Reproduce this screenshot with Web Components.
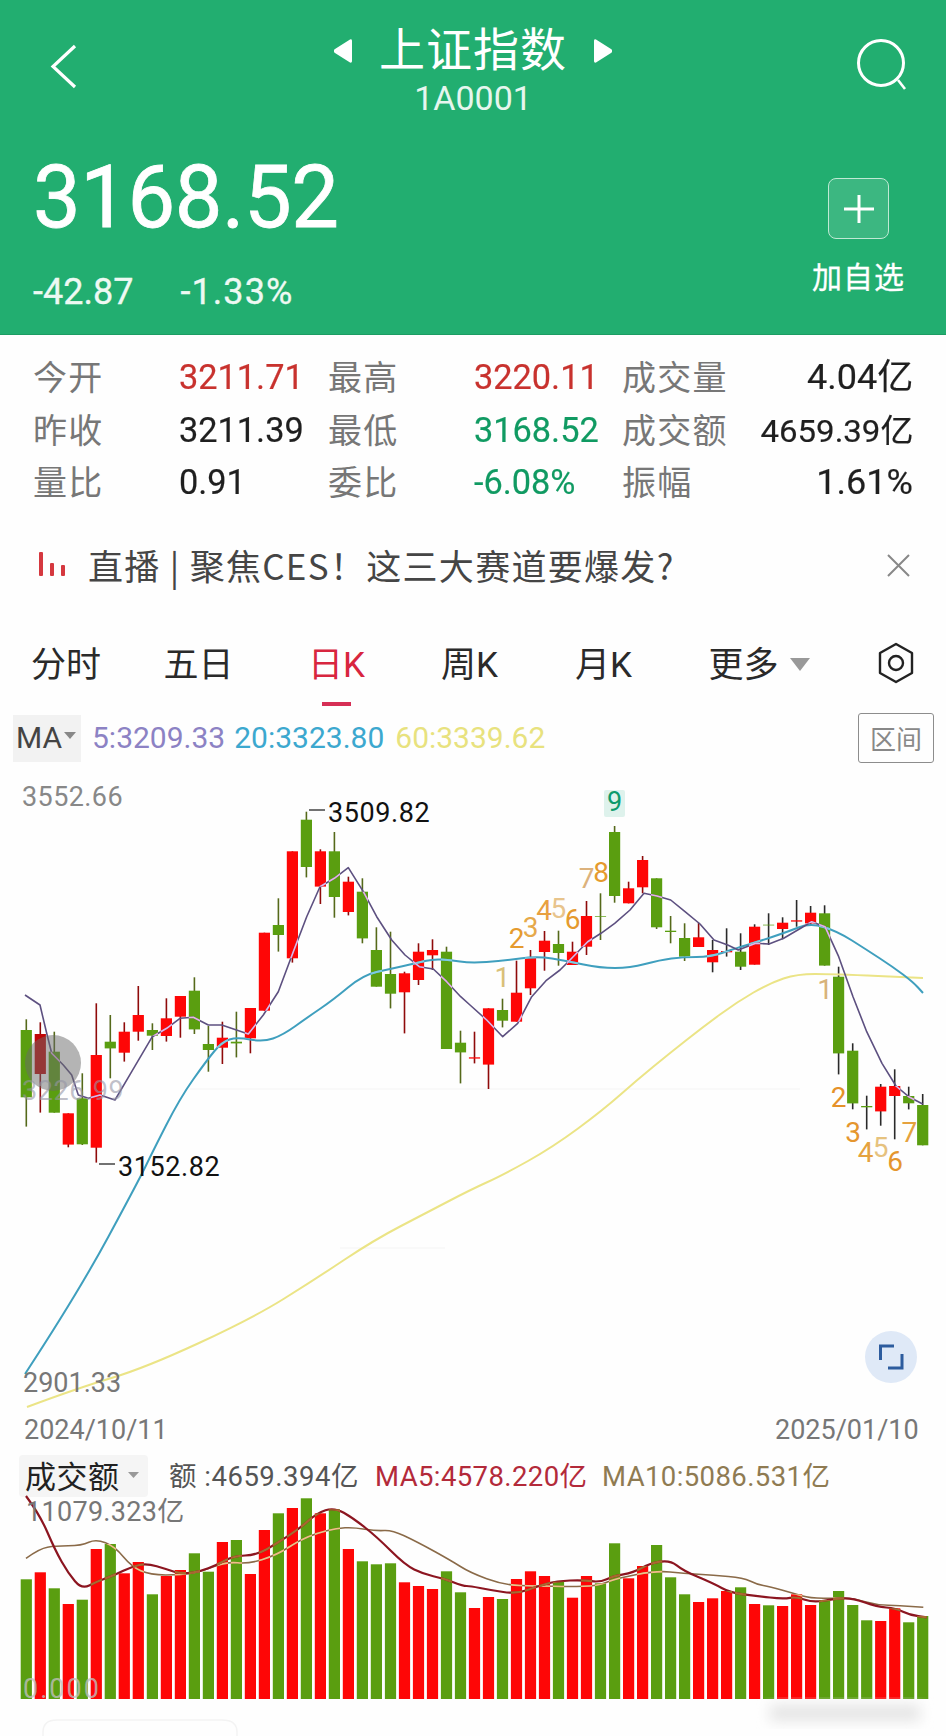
<!doctype html>
<html lang="zh">
<head>
<meta charset="utf-8">
<title>上证指数</title>
<style>
  html, body { margin: 0; background: #fefefe; }
  body { width: 946px; height: 1736px; overflow: hidden; font-family: Roboto, "Noto Sans CJK SC", sans-serif; }
</style>
</head>
<body>
<template id="quote_header">
  <style>
    :host { display: block; height: 335px; box-sizing: border-box; background: #22ae70; color: #fff; border-bottom: 1px solid #1c9c63; }
    .top { display: grid; grid-template-columns: 1fr auto 1fr; height: 131px; padding-top: 18px; box-sizing: border-box; }
    .back { padding: 26px 0 0 50px; }
    .search { justify-self: end; padding: 20px 38px 0 0; }
    .title { display: flex; align-items: center; gap: 27px; height: 56px; font: 400 46px/56px "Noto Sans CJK SC", sans-serif; letter-spacing: 1px; }
    .title svg { margin-top: 10px; }
    .code { text-align: center; font: 400 34px/36px Roboto, sans-serif; color: #e6f6ee; margin-top: 6px; }
    .bottom { display: flex; justify-content: space-between; padding: 0 41px 0 33px; }
    .price { font: 400 88px/92px Roboto, sans-serif; transform: scaleX(.965); transform-origin: left; letter-spacing: -.5px; margin-top: 20px; -webkit-text-stroke: .8px #fff; }
    .change { display: flex; gap: 47px; font: 400 36px/44px Roboto, sans-serif; margin-top: 27px; color: #eef9f3; -webkit-text-stroke: .3px #eef9f3; }
    .change ::slotted([slot=percent]) { letter-spacing: 1.100px; }
    .add { display: flex; flex-direction: column; align-items: center; }
    .box { width: 61px; height: 61px; box-sizing: border-box; margin-top: 47px; border: 1px solid #bfe9d4; border-radius: 8px; background: rgba(255,255,255,.12); display: flex; align-items: center; justify-content: center; }
    .add span { font: 400 30px/40px "Noto Sans CJK SC", sans-serif; margin-top: 16px; letter-spacing: 1px; -webkit-text-stroke: .3px #fff; }
  </style>
  <div class="top">
    <div class="back"><svg width="28" height="46" viewBox="0 0 28 46" fill="none" stroke="#fff" stroke-width="3.2"><path d="M25 2 3 22.5 25 43"/></svg></div>
    <div>
      <div class="title">
        <svg width="18" height="24" viewBox="0 0 18 24"><path d="M16 .5 1 10a2.300 2.300 0 0 0 0 4l15 9.500a1.500 1.500 0 0 0 2-1.300V1.800A1.500 1.500 0 0 0 16 .5z" fill="#fff"/></svg>
        <span><slot name="title"></slot></span>
        <svg width="18" height="24" viewBox="0 0 18 24"><path d="M2 .5 17 10a2.300 2.300 0 0 1 0 4L2 23.500a1.500 1.500 0 0 1-2-1.300V1.800A1.500 1.500 0 0 1 2 .5z" fill="#fff"/></svg>
      </div>
      <div class="code"><slot name="code"></slot></div>
    </div>
    <div class="search"><svg width="52" height="54" viewBox="0 0 52 54" fill="none" stroke="#fff" stroke-width="3"><circle cx="25" cy="25" r="22.5"/><path d="M42 42l7 9" stroke-width="2.6"/></svg></div>
  </div>
  <div class="bottom">
    <div>
      <div class="price"><slot name="price"></slot></div>
      <div class="change"><slot name="change"></slot><slot name="percent"></slot></div>
    </div>
    <div class="add">
      <div class="box"><svg width="32" height="32" viewBox="0 0 32 32" stroke="#fff" stroke-width="3"><path d="M1 16h30M16 2v28"/></svg></div>
      <span><slot name="add"></slot></span>
    </div>
  </div>
</template>

<template id="stat_grid">
  <style>
    :host { display: grid; grid-template-columns: 295px 294px 291px; grid-auto-rows: 52.5px; padding: 17px 0 11.5px 33px; }
  </style>
  <slot></slot>
</template>

<template id="stat_cell">
  <style>
    :host { display: flex; align-items: center; }
    .l { width: 146px; flex: none; margin-top: -4px; font: 400 34px/52px "Noto Sans CJK SC", sans-serif; color: #777; letter-spacing: 1.200px; white-space: nowrap; }
    .v { font: 400 35px/52px Roboto, "Noto Sans CJK SC", sans-serif; color: #1f1f1f; transform: scaleX(.98); transform-origin: left; white-space: nowrap; -webkit-text-stroke: .2px currentColor; }
    :host([tone=up]) .v { color: #c8322e; }
    :host([tone=down]) .v { color: #109a62; }
    :host([end]) .l { width: auto; }
    :host([end]) .v { margin-left: auto; transform: scaleX(1.03); transform-origin: right; }
    :host([small]) .v { font-size: 32px; }
  </style>
  <span class="l"></span><span class="v"><slot></slot></span>
</template>

<template id="news_bar">
  <style>
    :host { display: flex; align-items: center; height: 90px; padding: 0 36px 2px 39px; box-sizing: border-box; color: #454545; }
    .t { flex: 1; margin-left: 22px; font: 400 35px/44px "Noto Sans CJK SC", Roboto, sans-serif; white-space: nowrap; letter-spacing: 1.300px; }
  </style>
  <svg width="27" height="26" viewBox="0 0 27 26" fill="#d5383f"><rect width="4" height="24" rx="1"/><rect x="11" y="11" width="4" height="13" rx="1"/><rect x="22" y="13" width="4" height="11" rx="1"/></svg>
  <span class="t"><slot></slot></span>
  <svg width="23" height="23" viewBox="0 0 23 23" stroke="#888" stroke-width="2" fill="none"><path d="M1 1l21 21M22 1 1 22"/></svg>
</template>

<template id="period_tabs">
  <style>
    :host { display: grid; grid-template-columns: 132px 133px 143px 123px 145px 133px 1fr; height: 102px; align-items: start; padding-top: 31px; box-sizing: border-box; }
    ::slotted(*) { justify-self: center; }
    .gear { justify-self: start; margin: 0 0 0 68px; }
  </style>
  <slot></slot>
  <svg class="gear" width="38" height="42" viewBox="0 0 38 42" fill="none" stroke="#222" stroke-width="2.400"><path d="M19 2 35 11v20L19 40 3 31V11z" stroke-linejoin="round"/><circle cx="19" cy="21" r="7"/></svg>
</template>

<template id="period_tab">
  <style>
    :host { display: block; position: relative; font: 400 35px/48px Roboto, "Noto Sans CJK SC", sans-serif; color: #2a2a2a; white-space: nowrap; }
    :host([active]) { color: #d8263f; }
    :host([active])::after { content: ""; position: absolute; left: 14px; right: 14px; bottom: -16px; height: 4px; background: #d62f55; }
    :host([more]) { justify-self: start; padding-right: 31px; margin-left: 33px; }
    :host([more])::after { content: ""; position: absolute; right: 0; top: 16px; border: 10px solid transparent; border-top: 13px solid #999; border-bottom: 0; }
  </style>
  <slot></slot>
</template>

<template id="ma_legend">
  <style>
    :host { display: flex; align-items: center; height: 50px; padding-left: 13px; font: 400 30px/50px Roboto, sans-serif; white-space: nowrap; }
    .ma { display: flex; align-items: center; width: 68px; height: 47px; margin-right: 11px; background: #f2f2f2; color: #444; padding-left: 3px; box-sizing: border-box; gap: 2px; }
    .ma i { border: 6px solid transparent; border-top: 7px solid #888; border-bottom: 0; margin-top: -6px; }
    .a { color: #8c82c4; } .b { color: #3ca8cf; margin-left: 9px; } .c { color: #e8e27e; margin-left: 11px; }
    .range { margin-left: auto; margin-right: 12px; width: 76px; height: 50px; box-sizing: border-box; border: 1px solid #8d8d8d; border-radius: 3px; color: #888; font: 400 26px/48px "Noto Sans CJK SC", sans-serif; text-align: center; }
  </style>
  <div class="ma">MA<i></i></div>
  <span class="a"><slot name="ma5"></slot></span><span class="b"><slot name="ma20"></slot></span><span class="c"><slot name="ma60"></slot></span>
  <div class="range"><slot name="range"></slot></div>
</template>

<template id="kline_chart">
  <style>
    :host { display: block; height: 687px; }
    svg { display: block; }
    text { font-family: Roboto, sans-serif; }
  </style>
  <svg width="946" height="687" viewBox="0 763 946 687"></svg>
</template>

<template id="volume_panel">
  <style>
    :host { display: block; height: 286px; }
    svg { display: block; }
    text { font-family: Roboto, "Noto Sans CJK SC", sans-serif; }
  </style>
  <svg width="946" height="286" viewBox="0 1450 946 286"></svg>
</template>

<quote-header>
  <span slot="title">上证指数</span>
  <span slot="code">1A0001</span>
  <span slot="price">3168.52</span>
  <span slot="change">-42.87</span>
  <span slot="percent">-1.33%</span>
  <span slot="add">加自选</span>
</quote-header>

<stat-grid>
  <stat-cell label="今开" tone="up">3211.71</stat-cell>
  <stat-cell label="最高" tone="up">3220.11</stat-cell>
  <stat-cell label="成交量" end>4.04亿</stat-cell>
  <stat-cell label="昨收">3211.39</stat-cell>
  <stat-cell label="最低" tone="down">3168.52</stat-cell>
  <stat-cell label="成交额" end small>4659.39亿</stat-cell>
  <stat-cell label="量比">0.91</stat-cell>
  <stat-cell label="委比" tone="down">-6.08%</stat-cell>
  <stat-cell label="振幅" end>1.61%</stat-cell>
</stat-grid>

<news-bar>直播 | 聚焦CES！这三大赛道要爆发?</news-bar>

<period-tabs>
  <period-tab>分时</period-tab>
  <period-tab>五日</period-tab>
  <period-tab active>日K</period-tab>
  <period-tab>周K</period-tab>
  <period-tab>月K</period-tab>
  <period-tab more>更多</period-tab>
</period-tabs>

<ma-legend>
  <span slot="ma5">5:3209.33</span>
  <span slot="ma20">20:3323.80</span>
  <span slot="ma60">60:3339.62</span>
  <span slot="range">区间</span>
</ma-legend>

<kline-chart></kline-chart>
<volume-panel></volume-panel>

<script>
  const define = (name, id, extra) => {
    window.customElements.define(name, class extends HTMLElement {
      constructor() {
        super()
        this.attachShadow({mode: 'open'}).appendChild(document.getElementById(id).content.cloneNode(true))
      }
      connectedCallback() { if (extra) extra(this, this.shadowRoot) }
    })
  }

  const barX = i => 26.3 + i * 14.006
  const path = pts => 'M' + pts.map(p => p[0].toFixed(1) + ' ' + p[1].toFixed(1)).join('L')
  // rounded version for the slow averages: quadratic through the midpoints
  const smooth = pts => {
    let d = 'M' + pts[0][0].toFixed(1) + ' ' + pts[0][1].toFixed(1)
    for (let i = 1; i < pts.length - 1; i++) {
      const mx = (pts[i][0] + pts[i + 1][0]) / 2, my = (pts[i][1] + pts[i + 1][1]) / 2
      d += `Q${pts[i][0].toFixed(1)} ${pts[i][1].toFixed(1)} ${mx.toFixed(1)} ${my.toFixed(1)}`
    }
    const end = pts[pts.length - 1]
    return d + 'L' + end[0].toFixed(1) + ' ' + end[1].toFixed(1)
  }
  // points were read off the zoomed crops: left crop starts at x=0, right crop at x=470
  const scale = (list, ox, oy) => list.map(p => [ox + p[0] / 3, oy + p[1] / 3])

  // dir, body top, body bottom, wick top, wick bottom (crop units, y = 770 + v / 3)
  const candles = [
    ['g',780,982,748,1070],['d',792,912,757,1028],['g',845,1028,785,1028],['r',1030,1124,1030,1132],['g',985,1123,910,1125],
    ['r',855,1133,700,1178],['g',815,835,735,925],['r',785,848,757,875],['r',735,785,648,812],['g',780,797,760,840],
    ['r',745,798,685,815],['r',678,740,678,803],['g',662,778,622,792],['g',822,840,768,905],['r',803,833,755,882],
    ['g',815,820,725,862],['r',714,805,714,850],['r',488,722,488,722],['g',465,495,385,545],['r',244,565,244,578],
    ['g',149,291,125,322],['r',244,350,238,402],['g',244,381,186,443],['r',335,426,320,436],['g',365,505,325,520],
    ['g',540,650,472,650],['g',612,671,485,715],['r',610,667,605,790],['r',545,630,520,645],['r',540,556,508,600],
    ['g',545,837,530,837],['g',818,847,782,940],['r',862,866,785,880],['r',715,884,715,957],['g',720,752,686,772],
    ['r',668,755,572,755],['r',562,655,540,675],['r',512,546,483,602],['g',522,549,482,587],['r',545,585,515,585],
    ['r',438,530,393,555],['g',439,441,370,510],['g',186,378,168,398],['r',355,400,335,400],['r',270,352,258,370],
    ['g',325,472,325,477],['g',482,486,438,520],['g',504,560,460,573],['r',502,531,458,531],['r',540,577,510,607],
    ['r',543,547,475,560],['g',545,590,490,600],['r',470,584,463,584],['g',464,466,430,525],['r',458,477,442,508],
    ['r',451,455,390,470],['r',428,460,408,465],['g',430,587,406,587],['g',620,850,590,913],['g',842,1000,820,1018],
    ['g',1008,1012,977,1078],['r',950,1024,942,1067],['r',948,978,898,1108],['g',978,1000,950,1018],['g',1005,1126,972,1126]
  ]

  const ma5 = scale([[75,675],[120,705],[140,790],[155,850],[190,885],[215,915],[235,975],[265,985],[300,975],[345,990],[395,905],[457,800],[500,775],[540,745],[580,742],[625,765],[665,765],[745,792],[790,735],[835,665],[880,545],[920,440],[960,350],[1003,325],[1045,293],[1090,365],[1130,440],[1175,510],[1215,555],[1258,590],[1300,597],[1340,635],[1382,680]], 0, 770)
    .concat(scale([[0,705],[50,750],[98,800],[143,760],[185,680],[228,632],[270,600],[300,570],[353,515],[393,490],[434,460],[480,420],[522,370],[561,378],[602,390],[645,425],[690,462],[732,510],[773,525],[805,540],[857,520],[897,522],[941,505],[983,480],[1025,455],[1065,470],[1106,560],[1149,680],[1190,785],[1236,880],[1278,948],[1316,980],[1358,1002]], 470, 770))
  const ma20 = [[25,1374],[78,1293],[139,1180],[152,1153],[180,1098],[207,1060],[222,1042],[237,1037],[263,1042],[283,1035],[308,1017],[333,1000],[363,975],[390,969],[417,963],[433,959],[450,960],[470,963],[503,961],[537,956],[567,961],[600,968],[630,968],[660,960],[683,957],[710,957],[737,948],[757,942],[787,932],[810,923],[837,931],[867,950],[893,967],[913,982],[923,993]]
  const ma60 = [[27,1407],[78,1388],[145,1368],[253,1318],[314,1280],[374,1240],[428,1212],[470,1190],[503,1175],[553,1147],[603,1110],[637,1080],[670,1053],[703,1027],[737,1002],[770,983],[797,974],[833,974],[923,978]]

  // digit, crop x, crop y, colour (right crop)
  const seq = [
    ['1',97,620,'#d9c078'],['2',140,505,'#e59a2e'],['3',182,472,'#e6a94a'],['4',222,420,'#e8a040'],['5',265,415,'#e8c48c'],['6',308,447,'#e59a2e'],
    ['7',350,325,'#dcb27c'],['8',393,305,'#e59a2e'],['1',1065,657,'#d8b37a'],['2',1106,980,'#e5912a'],['3',1149,1085,'#e5962e'],['4',1187,1145,'#e5a23e'],['5',1232,1130,'#e6c27e'],['6',1275,1172,'#e5962e'],['7',1318,1085,'#e5a23e']
  ]

  const text = (x, y, s, size, fill, more) => `<text x="${x}" y="${y}" font-size="${size}" fill="${fill}" ${more || ''}>${s}</text>`

  // pale copy of a line where it runs over the bars
  const line = (d, color, pale, w, clip) =>
    `<path d="${d}" fill="none" stroke="${color}" stroke-width="${w}" stroke-linejoin="round"/>` +
    (pale ? `<path d="${d}" fill="none" stroke="${pale}" stroke-width="${w}" stroke-linejoin="round" clip-path="url(#${clip})"/>` : '')

  const drawKline = (el, root) => {
    const fills = {r: '#fe0606', g: '#5a9e10', d: '#c00505'}
    const wicks = {r: '#8f0a0a', g: '#55691a', d: '#8f0a0a'}
    let out = '', clip = ''
    candles.forEach((c, i) => {
      const x = barX(i), top = 770 + c[1] / 3, bot = 770 + c[2] / 3
      const wick = i >= 49 ? '#2a2a2a' : wicks[c[0]]
      out += `<rect x="${(x - .8).toFixed(1)}" y="${(770 + c[3] / 3).toFixed(1)}" width="1.6" height="${((c[4] - c[3]) / 3).toFixed(1)}" fill="${wick}"/>`
      out += `<rect x="${(x - 5.6).toFixed(1)}" y="${top.toFixed(1)}" width="11.2" height="${(bot - top).toFixed(1)}" fill="${fills[c[0]]}"/>`
      clip += `<rect x="${(x - 5.6).toFixed(1)}" y="${top.toFixed(1)}" width="11.2" height="${(bot - top).toFixed(1)}"/>`
    })
    let s = `<defs><clipPath id="bodies">${clip}</clipPath></defs>`
    s += '<path d="M190 1089H800M340 1248H445" stroke="#f4f4f4" stroke-width="1"/>'
    s += out
    s += line(smooth(ma60), '#ebe486', null, 2)
    s += line(smooth(ma20), '#3f9fbe', '#7fcbe0', 2, 'bodies')
    s += line(path(ma5), '#5d5080', '#e6b4e4', 1.6, 'bodies')
    s += '<circle cx="53" cy="1063" r="28" fill="rgba(105,105,105,.5)"/>'
    s += text(22, 806, '3552.66', 27, '#888', 'letter-spacing=".4"')
    s += '<path d="M309 810h16M99 1164h16" stroke="#444" stroke-width="1.5"/>'
    s += text(328, 822, '3509.82', 27, '#111', 'letter-spacing=".6"')
    s += text(118, 1176, '3152.82', 27, '#111', 'letter-spacing=".6"')
    s += text(22, 1100, '3226.99', 27, 'rgba(150,150,165,.6)', 'letter-spacing=".6"')
    s += '<rect x="604" y="790" width="21" height="27" rx="2" fill="#def2ec"/>'
    s += text(614.5, 811, '9', 27, '#0c9a6b', 'text-anchor="middle"')
    seq.forEach(d => { s += text((470 + d[1] / 3).toFixed(1), (770 + d[2] / 3 + 10).toFixed(1), d[0], 28, d[3], 'text-anchor="middle"') })
    s += text(23, 1392, '2901.33', 27, '#777')
    s += text(24, 1439, '2024/10/11', 27, '#777')
    s += text(775, 1439, '2025/01/10', 27, '#777')
    s += '<circle cx="891" cy="1357" r="26" fill="#dfe9f7"/>'
    s += '<path d="M894 1346H880.500V1360M902 1354V1368H888" fill="none" stroke="#2d5c9e" stroke-width="3"/>'
    root.querySelector('svg').innerHTML = s
  }

  const tops = [388,367,415,462,449,297,282,370,336,433,378,360,310,365,276,270,372,240,190,174,145,190,178,297,334,343,340,397,408,417,364,427,474,441,447,387,364,378,395,443,378,400,280,385,348,285,382,433,456,445,423,412,462,466,468,433,465,450,423,465,511,513,475,517,498]
  const volMa5 = scale([[78,138],[120,195],[165,300],[205,370],[245,418],[290,395],[345,375],[395,350],[440,340],[500,358],[545,372],[600,365],[650,345],[700,318],[770,315],[830,280],[900,235],[950,190],[1003,172],[1060,205],[1130,260],[1215,345],[1270,372],[1330,385],[1390,408]], 0, 1450)
    .concat(scale([[0,408],[60,420],[140,432],[200,410],[260,393],[340,390],[390,397],[430,378],[490,368],[540,340],[600,330],[640,362],[730,400],[780,428],[860,438],[940,447],[980,440],[1030,458],[1100,445],[1150,445],[1220,470],[1278,475],[1320,495],[1370,502]], 470, 1450))
  const volMa10 = scale([[78,325],[120,295],[165,288],[245,287],[288,267],[345,290],[395,350],[450,375],[545,375],[600,365],[680,335],[745,342],[830,315],[900,270],[950,250],[1010,235],[1060,232],[1130,243],[1175,240],[1250,275],[1350,330]], 0, 1450)
    .concat(scale([[0,368],[100,405],[200,408],[300,410],[380,408],[440,385],[560,362],[640,370],[730,376],[820,383],[860,403],[900,410],[970,430],[1020,445],[1100,445],[1150,445],[1220,465],[1290,467],[1360,472]], 470, 1450))

  const redBars = [1, 3, 5, 7, 8, 10, 11, 14, 16, 17, 19, 21, 23, 27, 28, 29, 32, 33, 35, 36, 37, 39, 40, 43, 44, 48, 49, 50, 52, 54, 55, 56, 61, 62]

  const drawVolume = (el, root) => {
    const base = 1699
    let out = '', clip = ''
    tops.forEach((t, i) => {
      const x = barX(i) - 5.6, y = 1450 + t / 3, h = base - y
      out += `<rect x="${x.toFixed(1)}" y="${y.toFixed(1)}" width="11.2" height="${h.toFixed(1)}" fill="${redBars.includes(i) ? '#fe0606' : '#5a9e10'}"/>`
      clip += `<rect x="${x.toFixed(1)}" y="${y.toFixed(1)}" width="11.2" height="${h.toFixed(1)}"/>`
    })
    let s = `<defs><clipPath id="bars">${clip}</clipPath><filter id="soft" x="-20%" y="-50%" width="140%" height="200%"><feGaussianBlur stdDeviation="7"/></filter></defs>`
    s += '<rect x="19" y="1455" width="129" height="42" rx="4" fill="#f5f5f5"/>'
    s += text(25, 1488, '成交额', 31, '#222', 'letter-spacing=".5"')
    s += '<path d="M128 1472h11l-5.500 6z" fill="#999"/>'
    s += text(169, 1486, '额 :4659.394亿', 27.5, '#555', 'letter-spacing=".5"')
    s += text(375, 1486, 'MA5:4578.220亿', 27.5, '#b32a3a', 'letter-spacing=".4"')
    s += text(602, 1486, 'MA10:5086.531亿', 27.5, '#8f7b52', 'letter-spacing=".4"')
    s += out
    s += line(smooth(volMa10), '#8a6a48', '#f0c088', 1.6, 'bars')
    s += line(smooth(volMa5), '#8c1520', '#a86a30', 2.2, 'bars')
    s += text(26, 1521, '11079.323亿', 27, '#777', 'letter-spacing=".3"')
    s += text(23, 1698, '0.000', 27, 'rgba(190,190,190,.8)', 'letter-spacing="2"')
    s += '<path d="M43 1736v-4q0-12 14-12H222q15 0 15 12v4" fill="none" stroke="#f3f3f3" stroke-width="1.5"/>'
    s += '<rect x="770" y="1705" width="150" height="16" fill="#e4e4e4" filter="url(#soft)"/>'
    root.querySelector('svg').innerHTML = s
  }

  define('quote-header', 'quote_header')
  define('stat-grid', 'stat_grid')
  define('stat-cell', 'stat_cell', (el, root) => { root.querySelector('.l').textContent = el.getAttribute('label') })
  define('news-bar', 'news_bar')
  define('period-tabs', 'period_tabs')
  define('period-tab', 'period_tab')
  define('ma-legend', 'ma_legend')
  define('kline-chart', 'kline_chart', drawKline)
  define('volume-panel', 'volume_panel', drawVolume)
</script>
</body>
</html>
